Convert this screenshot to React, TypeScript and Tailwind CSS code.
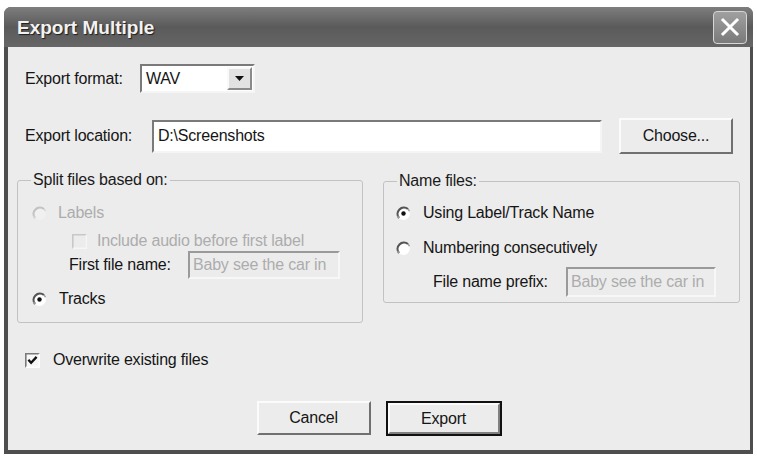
import React from "react";

function Radio({ checked = false, disabled = false }: { checked?: boolean; disabled?: boolean }) {
  const dark = disabled ? "#c2c2c2" : "#555555";
  const mid = disabled ? "#d6d6d6" : "#9a9a9a";
  return (
    <svg width="15" height="15" viewBox="0 0 15 15" className="shrink-0">
      <circle cx="7.5" cy="7.5" r="6.4" fill={disabled ? "#f0f0f0" : "#ffffff"} />
      <path d="M3 12 A6.4 6.4 0 0 1 12 3" stroke={dark} strokeWidth="2.2" fill="none" />
      <path d="M12 3 A6.4 6.4 0 0 1 13.4 5.2" stroke={mid} strokeWidth="1.4" fill="none" />
      <path d="M1.6 9.8 A6.4 6.4 0 0 0 3 12" stroke={mid} strokeWidth="1.4" fill="none" />
      {checked && <circle cx="7.5" cy="7.5" r="2.2" fill="#111" />}
    </svg>
  );
}

function Check({ checked = false, disabled = false }: { checked?: boolean; disabled?: boolean }) {
  return (
    <svg width="15" height="15" viewBox="0 0 15 15" className="shrink-0">
      <rect x="0" y="0" width="15" height="15" fill={disabled ? "#ececec" : "#f7f7f7"} />
      <path d="M0.8 14.5 V0.8 H14.5" stroke={disabled ? "#c8c8c8" : "#7a7a7a"} strokeWidth="1.6" fill="none" />
      <path d="M14.3 0.8 V14.3 H0.8" stroke={disabled ? "#f6f6f6" : "#ffffff"} strokeWidth="1.4" fill="none" />
      {checked && <path d="M3.4 6.8 L6.1 9.8 L11.6 3.9" stroke="#111" strokeWidth="2.3" fill="none" />}
    </svg>
  );
}

function Group({ title, className, children }: { title: string; className: string; children: React.ReactNode }) {
  return (
    <div className={`relative border border-[#c2c2c2] rounded-[3px] ${className}`}>
      <span className="absolute left-[13px] top-[-10px] px-[2px] bg-[#ececec] text-[#1a1a1a] leading-[18px]">{title}</span>
      {children}
    </div>
  );
}

export default function App() {
  return (
    <div className="w-[757px] h-[457px] bg-white pl-[4px] pt-[7px] font-['Liberation_Sans',Arial,sans-serif] text-[16px] tracking-[-0.2px] text-[#151515]">
      <div className="w-[749px] h-[447px] flex flex-col rounded-t-[7px] overflow-hidden bg-[#555]">
        <div className="h-[40px] shrink-0 flex items-center justify-between pl-[13px] pr-[6px] bg-gradient-to-b from-[#7e7e7e] via-[#5a5a5a] to-[#666666]">
          <span className="text-[19px] font-bold tracking-[0px] text-[#f2f2f2] [text-shadow:1px_1px_1px_#1e1e1e] pt-[3px]">
            Export Multiple
          </span>
          <div className="w-[34px] h-[33px] rounded-[4px] border-[1.5px] border-[#d6d6d6] bg-gradient-to-b from-[#a0a0a0] to-[#7a7a7a] flex items-center justify-center">
            <svg width="20" height="20" viewBox="0 0 20 20">
              <path d="M3 3 L17 17 M17 3 L3 17" stroke="#ffffff" strokeWidth="3" strokeLinecap="square" />
            </svg>
          </div>
        </div>

        <div className="flex-1 flex flex-col bg-[#ececec] border-l-[4px] border-r-[3px] border-b-[4px] border-[#4e4e4e]">
          {/* Export format */}
          <div className="mt-[17px] pl-[17px] h-[29px] flex items-center">
            <span className="w-[115px]">Export format:</span>
            <div className="w-[115px] h-[29px] flex items-center bg-white border-2 border-t-[#7a7a7a] border-l-[#7a7a7a] border-b-[#f5f5f5] border-r-[#f5f5f5]">
              <span className="flex-1 pl-[4px]">WAV</span>
              <div className="w-[25px] h-[23px] mr-[1px] flex items-center justify-center bg-[#e2e2e2] border-2 border-t-[#fafafa] border-l-[#fafafa] border-b-[#8a8a8a] border-r-[#8a8a8a]">
                <svg width="9" height="5" viewBox="0 0 9 5">
                  <path d="M0 0 H9 L4.5 5 Z" fill="#111" />
                </svg>
              </div>
            </div>
          </div>

          {/* Export location */}
          <div className="mt-[25px] pl-[17px] h-[36px] flex items-center">
            <span className="w-[127px]">Export location:</span>
            <div className="w-[450px] h-[33px] flex items-center bg-white border-2 border-t-[#7a7a7a] border-l-[#7a7a7a] border-b-[#f5f5f5] border-r-[#f5f5f5]">
              <span className="pl-[4px]">D:\Screenshots</span>
            </div>
            <div className="ml-[17px] w-[114px] h-[36px] flex items-center justify-center bg-[#ececec] border-2 border-t-[#fbfbfb] border-l-[#fbfbfb] border-b-[#707070] border-r-[#707070]">
              Choose...
            </div>
          </div>

          {/* Groups */}
          <div className="mt-[26px] pl-[9px] flex items-start gap-[20px]">
            <Group title="Split files based on:" className="w-[346px] h-[143px] pl-[14px] pt-[21px]">
              <div className="h-[22px] flex items-center gap-[11px] text-[#acacac]">
                <Radio disabled />
                <span>Labels</span>
              </div>
              <div className="mt-[8px] h-[18px] pl-[40px] flex items-center gap-[10px] text-[#acacac]">
                <Check disabled />
                <span>Include audio before first label</span>
              </div>
              <div className="mt-[1px] h-[28px] pl-[37px] flex items-center">
                <span className="w-[119px]">First file name:</span>
                <div className="w-[152px] h-[28px] flex items-center bg-[#ececec] border-2 border-t-[#9a9a9a] border-l-[#9a9a9a] border-b-[#f7f7f7] border-r-[#f7f7f7] text-[#acacac] overflow-hidden whitespace-nowrap">
                  <span className="pl-[3px]">Baby see the car in</span>
                </div>
              </div>
              <div className="mt-[9px] h-[22px] flex items-center gap-[12px]">
                <Radio checked />
                <span>Tracks</span>
              </div>
            </Group>

            <Group title="Name files:" className="w-[357px] h-[122px] pl-[12px] pt-[20px] mt-[1px]">
              <div className="h-[22px] flex items-center gap-[12px]">
                <Radio checked />
                <span>Using Label/Track Name</span>
              </div>
              <div className="mt-[13px] h-[22px] flex items-center gap-[12px]">
                <Radio />
                <span>Numbering consecutively</span>
              </div>
              <div className="mt-[8px] h-[30px] pl-[37px] flex items-center">
                <span className="w-[133px]">File name prefix:</span>
                <div className="w-[150px] h-[30px] flex items-center bg-[#ececec] border-2 border-t-[#9a9a9a] border-l-[#9a9a9a] border-b-[#f7f7f7] border-r-[#f7f7f7] text-[#acacac] overflow-hidden whitespace-nowrap">
                  <span className="pl-[3px]">Baby see the car in</span>
                </div>
              </div>
            </Group>
          </div>

          {/* Overwrite */}
          <div className="mt-[29px] pl-[17px] h-[16px] flex items-center gap-[13px]">
            <Check checked />
            <span>Overwrite existing files</span>
          </div>

          {/* Buttons */}
          <div className="mt-[33px] flex justify-center items-start gap-[15px]">
            <div className="w-[114px] h-[34px] flex items-center justify-center bg-[#ececec] border-2 border-t-[#fbfbfb] border-l-[#fbfbfb] border-b-[#707070] border-r-[#707070]">
              Cancel
            </div>
            <div className="w-[116px] h-[35px] border-2 border-[#111] flex">
              <div className="flex-1 flex items-center justify-center bg-[#ececec] border-2 border-t-[#fbfbfb] border-l-[#fbfbfb] border-b-[#808080] border-r-[#808080]">
                Export
              </div>
            </div>
          </div>
        </div>
      </div>
    </div>
  );
}
